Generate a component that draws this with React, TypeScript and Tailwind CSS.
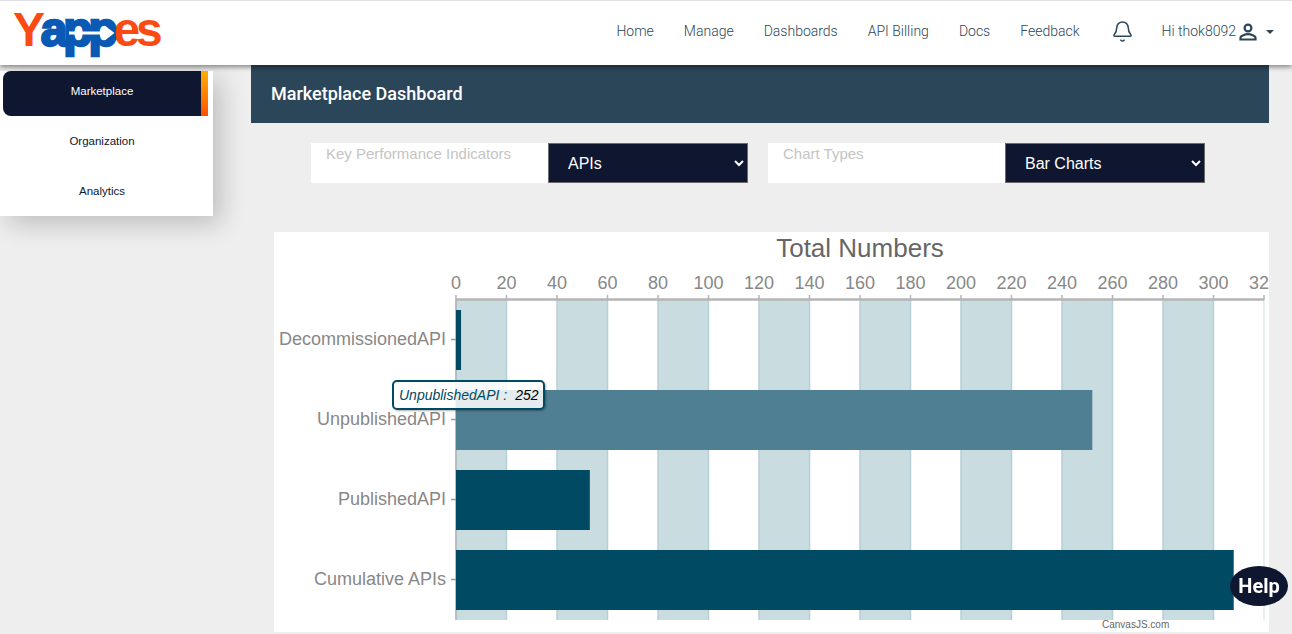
import React from "react";
import { Bell } from "lucide-react";

const navLinks = ["Home", "Manage", "Dashboards", "API Billing", "Docs", "Feedback"];
const ticks = Array.from({ length: 17 }, (_, i) => i * 20);
const bars = [
  { label: "DecommissionedAPI", value: 2, y: 78, color: "#004a63" },
  { label: "UnpublishedAPI", value: 252, y: 158, color: "#4f7f92" },
  { label: "PublishedAPI", value: 53, y: 238, color: "#004a63" },
  { label: "Cumulative APIs", value: 308, y: 318, color: "#004a63" },
];

const xFor = (v: number) => 182 + (v * 50.5) / 20;

function Logo() {
  return (
    <div className="relative ml-[13px] mt-[-6px] flex h-[56px] w-[150px] items-center font-['Liberation_Sans',sans-serif] text-[48px] font-bold leading-none tracking-[-4.2px]">
      <span className="text-[#fb4a12]">Y</span>
      <span className="text-[#0a5ab5] [-webkit-text-stroke:2.5px_#0a5ab5]">app</span>
      <span className="text-[#fb4a12]">es</span>
      {/* white arrow slot running through the "pp" */}
      <svg className="absolute left-[56px] top-[23px]" width="50" height="16" viewBox="0 0 50 16">
        <path d="M0 8h40" stroke="#fff" strokeWidth="3" />
        <path d="M35 2l8 6-8 6" fill="none" stroke="#fff" strokeWidth="3" />
      </svg>
    </div>
  );
}

function Header() {
  return (
    <header className="relative z-20 flex h-[65px] shrink-0 items-center justify-between border-t border-[#dfe0e6] bg-white pr-[18px] shadow-[0_2px_5px_rgba(0,0,0,0.45)]">
      <Logo />
      <nav className="flex items-center font-['Roboto',sans-serif] text-[14px] font-light text-[#2c4659]">
        <div className="mb-[4px] flex gap-[30px]">
          {navLinks.map((link) => (
            <a key={link} href="#">
              {link}
            </a>
          ))}
        </div>
        <Bell size={23} strokeWidth={1.6} className="mb-[4px] ml-[31px] text-[#2c4659]" />
        <span className="mb-[3px] ml-[28px]">Hi thok8092</span>
        <svg className="mb-[2px]" width="24" height="24" viewBox="0 0 24 24" fill="none" stroke="#2c4659" strokeWidth="2.2">
          <circle cx="12" cy="8" r="3.4" />
          <path d="M4.5 19.5v-1.7c0-2.2 5-3.6 7.5-3.6s7.5 1.4 7.5 3.6v1.7z" />
        </svg>
        <span className="mb-[2px] ml-[6px] h-0 w-0 border-x-[4px] border-t-[4px] border-x-transparent border-t-[#2c4659]" />
      </nav>
    </header>
  );
}

function Sidebar() {
  return (
    <aside className="mt-[6px] h-[145px] w-[213px] shrink-0 bg-white font-['Liberation_Sans',sans-serif] text-[11.5px] shadow-[8px_8px_24px_rgba(0,0,0,0.2)]">
      <div className="ml-[3px] flex h-[45px] w-[205px] overflow-hidden rounded-l-[8px] bg-[#0e1630] text-white">
        <span className="flex flex-1 items-center justify-center pb-[3px]">Marketplace</span>
        <span className="w-[7px] bg-gradient-to-b from-[#ffae00] to-[#ff4f00]" />
      </div>
      <div className="flex h-[50px] items-center justify-center pr-[9px] pt-[1px] text-[#0e1630]">Organization</div>
      <div className="flex h-[50px] items-center justify-center pr-[9px] pt-[2px] text-[#0e1630]">Analytics</div>
    </aside>
  );
}

function KpiSelect({ label, value, options }: { label: string; value: string; options: string[] }) {
  return (
    <div className="flex h-[40px] w-[437px] bg-white font-['Liberation_Sans',sans-serif]">
      <span className="w-[237px] pl-[15px] text-[15px] text-[#c4c4c4]">{label}</span>
      <select
        defaultValue={value}
        className="h-[40px] w-[200px] border border-[#6b6b6b] bg-[#0e1630] pl-[15px] text-[16px] text-white [color-scheme:dark]"
      >
        {options.map((o) => (
          <option key={o}>{o}</option>
        ))}
      </select>
    </div>
  );
}

function Chart() {
  return (
    <div className="relative ml-[23px] mt-[49px] h-[400px] w-[995px] bg-white font-['Liberation_Sans',sans-serif]">
      <svg width="995" height="400" viewBox="0 0 995 400" className="block">
        <text x="586" y="25" textAnchor="middle" fontSize="26" fill="#666">
          Total Numbers
        </text>
        {ticks.slice(0, 16).map((t, i) =>
          i % 2 === 0 ? <rect key={t} x={xFor(t)} y="68" width="50.5" height="320" fill="#c9dce0" /> : null
        )}
        {ticks.map((t) => (
          <g key={t}>
            <line x1={xFor(t)} x2={xFor(t)} y1="68" y2="388" stroke={t === 320 ? "#dfeaed" : "#b7cfd6"} strokeWidth="1.5" />
            <line x1={xFor(t)} x2={xFor(t)} y1="63" y2="68" stroke="#b5b5b5" strokeWidth="1.5" />
            <text x={xFor(t)} y="57" textAnchor="middle" fontSize="18" fill="#888">
              {t}
            </text>
          </g>
        ))}
        <line x1="182" x2="990" y1="67.5" y2="67.5" stroke="#b5b5b5" strokeWidth="2.5" />
        <line x1="182" x2="182" y1="67" y2="388" stroke="#b5b5b5" strokeWidth="1.5" />
        {bars.map((b) => (
          <g key={b.label}>
            <rect x="182" y={b.y} width={xFor(b.value) - 182} height="60" fill={b.color} />
            <line x1="177" x2="182" y1={b.y + 29.5} y2={b.y + 29.5} stroke="#999" strokeWidth="1.5" />
            <text x="172" y={b.y + 35} textAnchor="end" fontSize="18" fill="#888">
              {b.label}
            </text>
          </g>
        ))}
      </svg>
      <div className="absolute left-[118px] top-[148px] flex h-[30px] w-[153px] items-center gap-[8px] rounded-[5px] border-2 border-[#004a63] bg-white/85 pl-[5px] text-[14px] italic shadow-[1px_1px_2px_rgba(0,0,0,0.3)]">
        <span className="text-[#004a63]">UnpublishedAPI :</span>
        <span className="text-black">252</span>
      </div>
      <span className="absolute left-[828px] top-[385px] text-[10px] text-[#666]">CanvasJS.com</span>
    </div>
  );
}

export default function App() {
  return (
    <div className="relative flex h-screen flex-col overflow-hidden bg-[#eeeeee]">
      <Header />
      <div className="flex min-h-0 flex-1">
        <Sidebar />
        <main className="ml-[38px] w-[1018px] shrink-0">
          <h1 className="flex h-[58px] items-center bg-[#2c4659] pb-[2px] pl-[20px] font-['Roboto',sans-serif] text-[18px] font-medium text-white">
            Marketplace Dashboard
          </h1>
          <div className="ml-[60px] mt-[20px] flex gap-[20px]">
            <KpiSelect label="Key Performance Indicators" value="APIs" options={["APIs", "Users"]} />
            <KpiSelect label="Chart Types" value="Bar Charts" options={["Bar Charts", "Pie Charts"]} />
          </div>
          <Chart />
        </main>
      </div>
      <button className="fixed left-[1230px] top-[566px] flex h-[40px] w-[58px] items-center justify-center rounded-[50%] bg-[#0e1630] font-['Roboto',sans-serif] text-[20px] font-bold text-white">
        Help
      </button>
    </div>
  );
}
